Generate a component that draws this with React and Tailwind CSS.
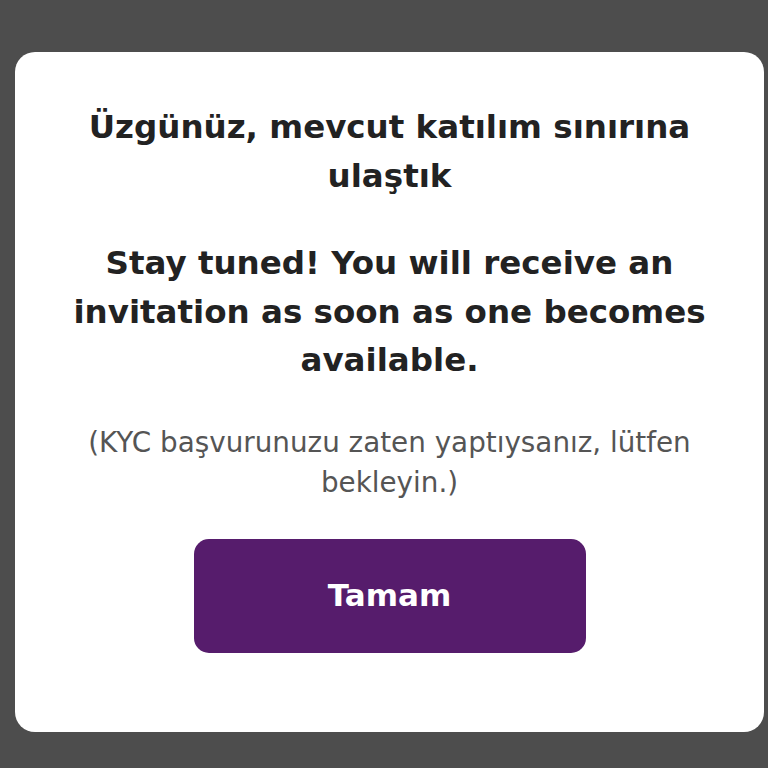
import React from 'react';

export default function App() {
  return (
    <div className="w-[768px] h-[768px] bg-[#4d4d4d] pt-[52px] pl-[15px]" style={{ fontFamily: '"DejaVu Sans", "Noto Sans", sans-serif' }}>
      <div className="bg-white rounded-[20px] w-[749px] h-[680px] flex flex-col items-center pt-[51px] px-[30px]">
        <h1 className="max-w-[660px] text-[32.5px] leading-[49px] font-bold text-[#222] text-center">
          Üzgünüz, mevcut katılım sınırına ulaştık
        </h1>
        <p className="mt-[38px] max-w-[680px] text-[32.5px] leading-[48.5px] font-bold text-[#222] text-center">
          Stay tuned! You will receive an invitation as soon as one becomes available.
        </p>
        <p className="mt-[38px] max-w-[660px] text-[27.8px] leading-[40.5px] text-[#555] text-center">
          (KYC başvurunuzu zaten yaptıysanız, lütfen bekleyin.)
        </p>
        <button className="mt-[35px] w-[392px] h-[114px] rounded-[15px] bg-[#561c6c] text-white text-[31px] font-bold">
          Tamam
        </button>
      </div>
    </div>
  );
}
